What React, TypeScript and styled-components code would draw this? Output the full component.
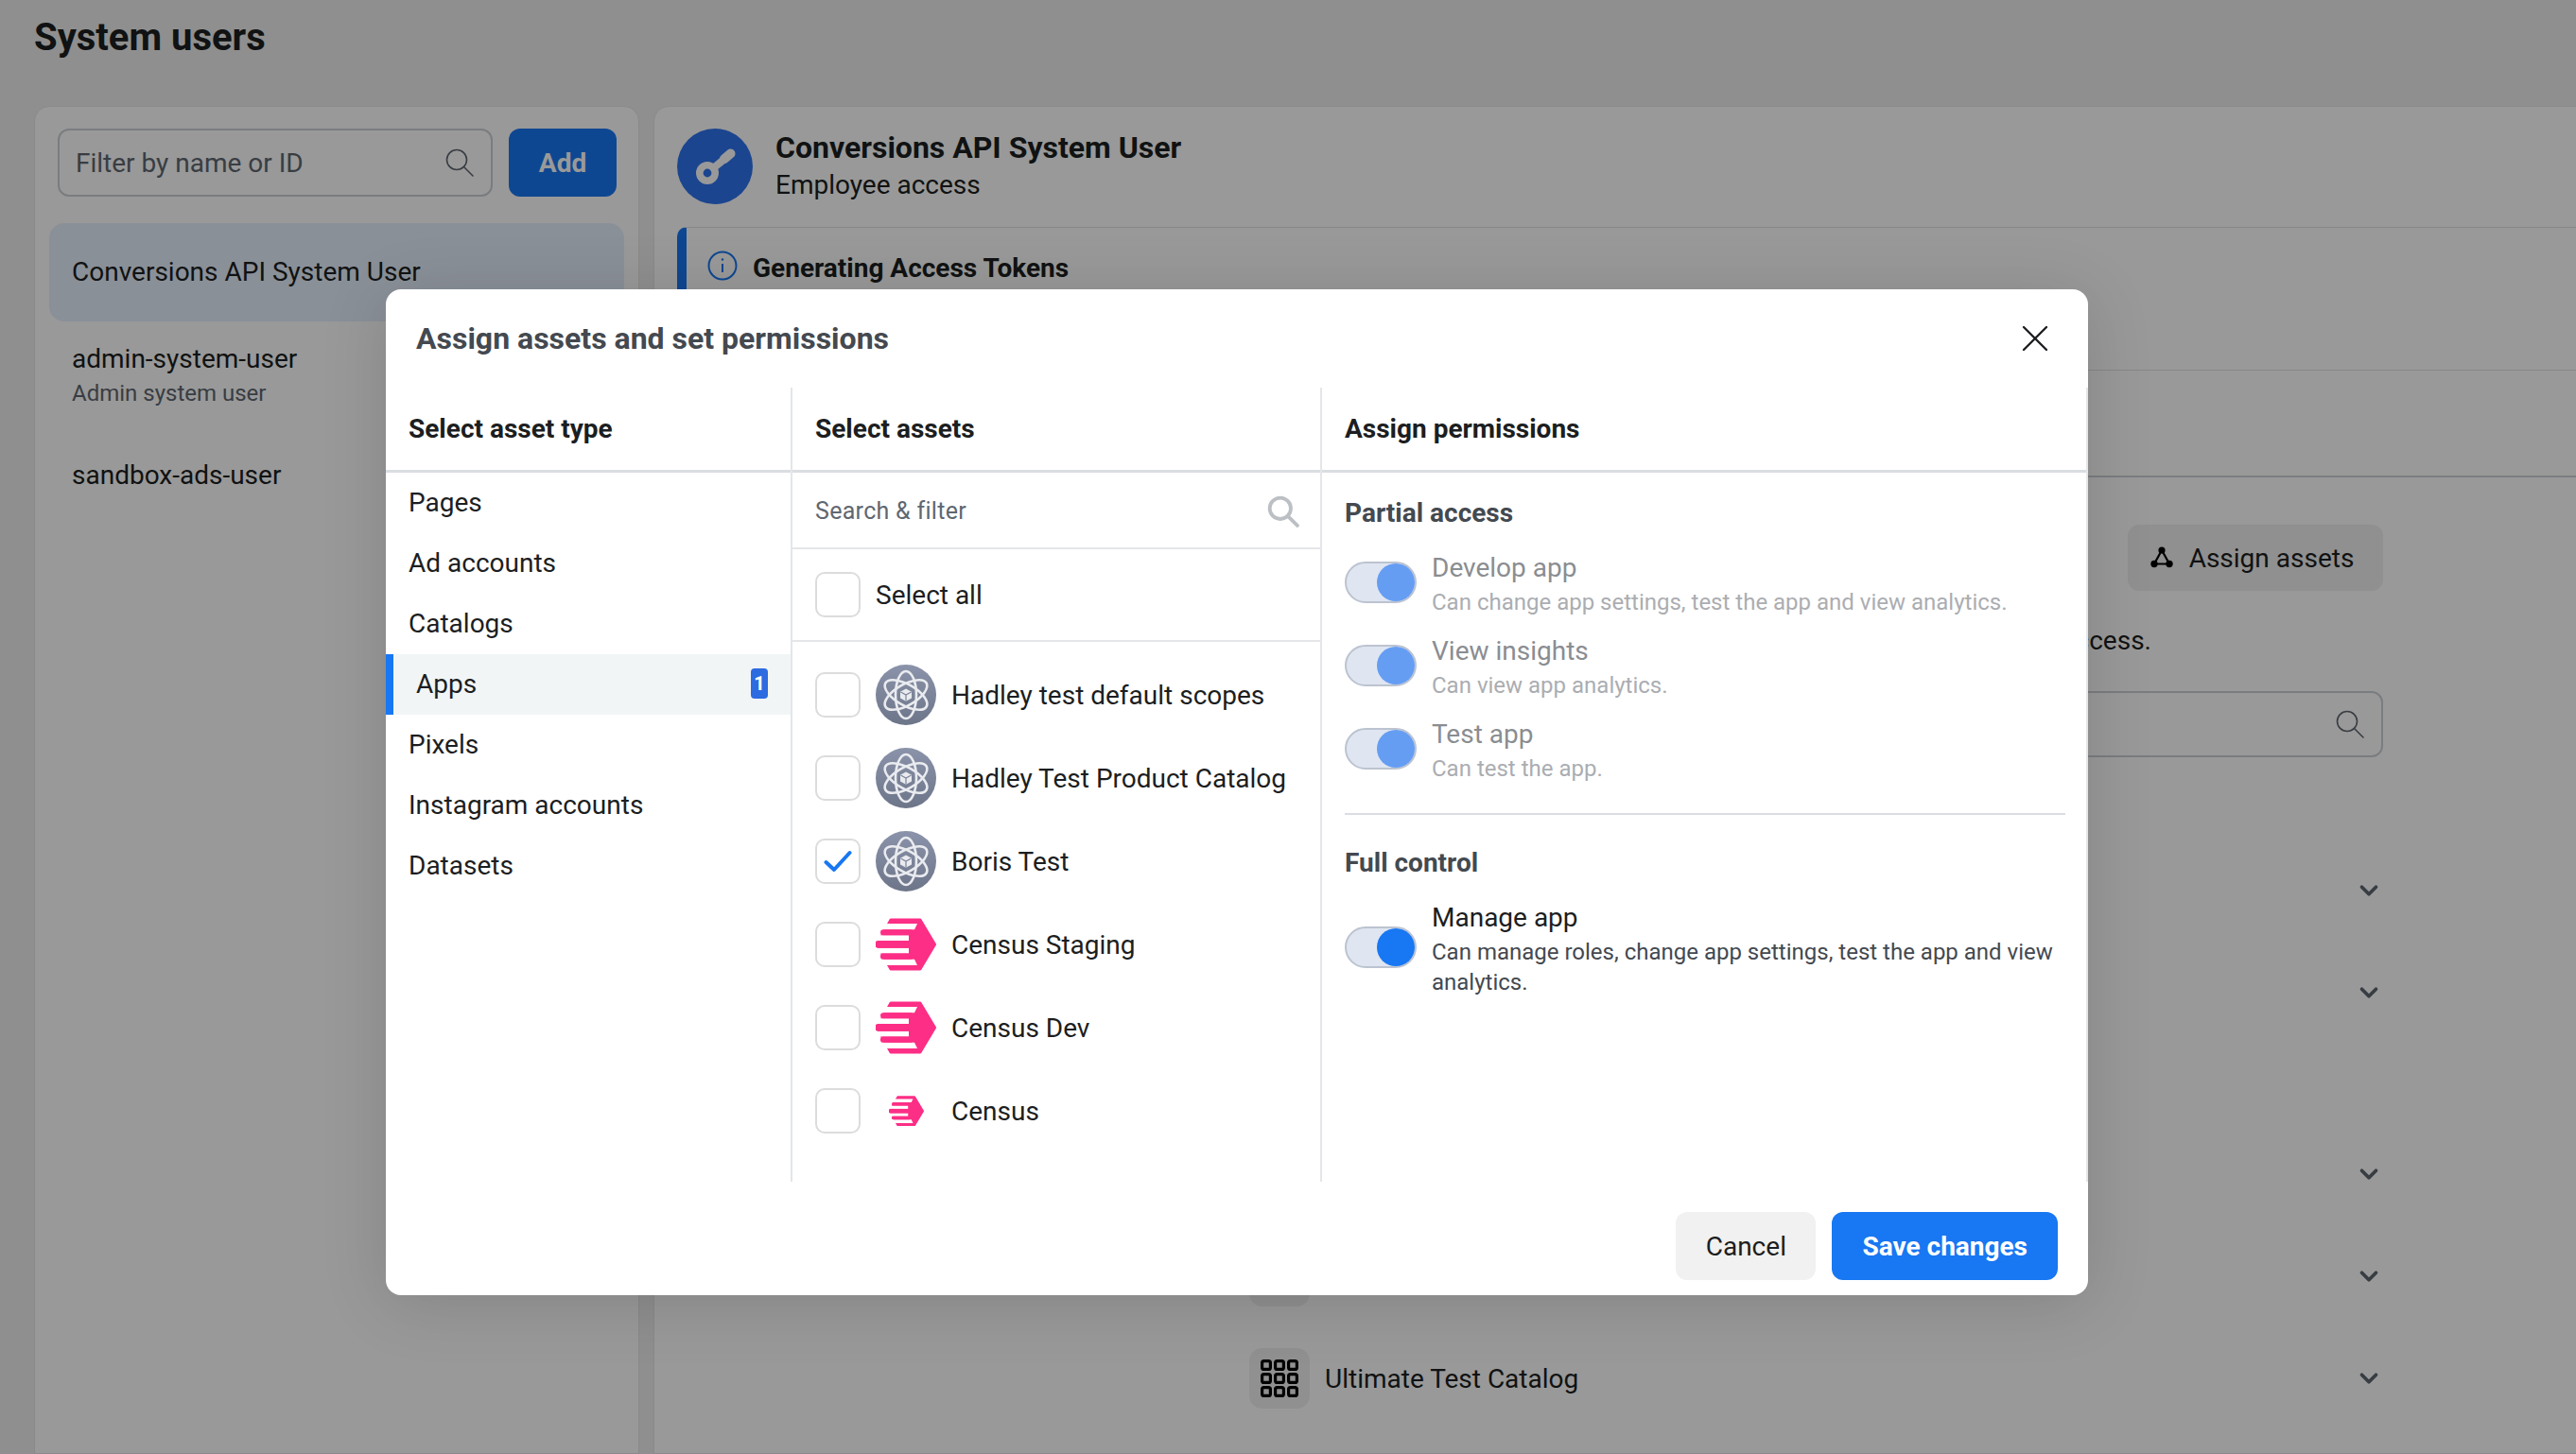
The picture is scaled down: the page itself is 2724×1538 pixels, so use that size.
import React from "react";
import styled, { createGlobalStyle } from "styled-components";
import { X, ChevronDown } from "lucide-react";

const Global = createGlobalStyle`
  html, body { margin: 0; padding: 0; background: #eeeeee; }
  body { font-family: Roboto, "Liberation Sans", sans-serif; color: #1c1e21; -webkit-font-smoothing: antialiased; }
  * { box-sizing: border-box; }
`;

const Page = styled.div`
  position: relative;
  width: 2724px;
  height: 1538px;
  overflow: hidden;
  background: #eeeeee;
`;
const PageTitle = styled.h1`
  margin: 0;
  padding: 16px 0 0 36px;
  height: 112px;
  font-size: 40px;
  line-height: 48px;
  font-weight: 700;
`;
const Columns = styled.div`
  display: flex;
  gap: 15px;
  padding-left: 36px;
  height: 1426px;
`;
const Card = styled.section`
  background: #fff;
  border: 1px solid #e6e6e6;
  border-radius: 16px 16px 0 0;
  flex: none;
`;
const SidePanel = styled(Card)`
  width: 640px;
  padding: 23px 15px 0;
`;
const SideTools = styled.div`
  display: flex;
  gap: 17px;
  padding: 0 8px 0 9px;
  margin-bottom: 28px;
`;
const Field = styled.div`
  flex: 1;
  height: 72px;
  display: flex;
  align-items: center;
  justify-content: space-between;
  padding: 0 17px;
  border: 2px solid #ccd0d5;
  border-radius: 12px;
  background: #fff;
  font-size: 28px;
  color: #606770;
`;
const AddButton = styled.div`
  width: 114px;
  height: 72px;
  border-radius: 12px;
  background: #1877f2;
  color: #fff;
  font-size: 28px;
  font-weight: 700;
  display: flex;
  align-items: center;
  justify-content: center;
`;
const UserRow = styled.div<{ $active?: boolean; $h: number }>`
  height: ${(p) => p.$h}px;
  padding: 0 24px;
  display: flex;
  flex-direction: column;
  justify-content: center;
  border-radius: 16px;
  background: ${(p) => (p.$active ? "#e7f0fe" : "transparent")};
  font-size: 28px;
  line-height: 36px;
`;
const UserNote = styled.div`
  font-size: 24px;
  line-height: 36px;
  color: #606770;
`;
const MainPanel = styled(Card)`
  width: 2060px;
`;
const MainHead = styled.div`
  display: flex;
  align-items: center;
  gap: 24px;
  padding: 23px 24px 24px;
`;
const Avatar = styled.div`
  width: 80px;
  height: 80px;
  border-radius: 50%;
  background: #2f74ee;
  flex: none;
`;
const HeadName = styled.div`
  font-size: 32px;
  line-height: 40px;
  font-weight: 700;
  margin-top: -2px;
`;
const HeadSub = styled.div`
  font-size: 28px;
  line-height: 38px;
  margin-top: 1px;
  color: #1c1e21;
`;
const Banner = styled.div`
  margin-left: 24px;
  height: 152px;
  border: 1px solid #e2e2e2;
  border-left: 10px solid #1877f2;
  border-radius: 10px 0 0 10px;
  padding: 24px 0 0 22px;
  display: flex;
  align-items: flex-start;
  gap: 16px;
  font-size: 28px;
  line-height: 38px;
  font-weight: 700;
`;
const TabsBar = styled.div`
  height: 113px;
  border-bottom: 2px solid #ccd0d5;
`;
const Content = styled.div`
  padding: 50px 230px 0 629px;
`;
const Toolbar = styled.div`
  display: flex;
  justify-content: flex-end;
`;
const GhostButton = styled.div`
  height: 70px;
  width: 270px;
  padding-right: 8px;
  border-radius: 12px;
  background: #f0f0f0;
  display: flex;
  align-items: center;
  justify-content: center;
  gap: 16px;
  font-size: 28px;
`;
const HelpLine = styled.div`
  margin-top: 35px;
  padding-right: 245px;
  text-align: right;
  font-size: 28px;
  line-height: 36px;
`;
const ContentSearch = styled(Field)`
  margin-top: 35px;
  height: 70px;
  justify-content: flex-end;
`;
const AssetGroup = styled.div<{ $gap: number }>`
  margin-top: ${(p) => p.$gap}px;
`;
const AssetRow = styled.div`
  height: 108px;
  display: flex;
  align-items: center;
  gap: 16px;
  font-size: 28px;
  > svg:last-child {
    margin-left: auto;
  }
`;
const AssetIcon = styled.div`
  width: 64px;
  height: 64px;
  border-radius: 14px;
  background: #f0f0f0;
  display: flex;
  align-items: center;
  justify-content: center;
`;

const Overlay = styled.div`
  position: absolute;
  inset: 0;
  background: rgba(0, 0, 0, 0.4);
  padding: 306px 0 0 408px;
`;
const Modal = styled.div`
  width: 1800px;
  height: 1064px;
  background: #fff;
  border-radius: 16px;
  box-shadow: 0 8px 70px rgba(0, 0, 0, 0.14);
  display: flex;
  flex-direction: column;
`;
const ModalHead = styled.div`
  height: 104px;
  padding: 0 32px;
  display: flex;
  align-items: center;
  justify-content: space-between;
`;
const ModalTitle = styled.h2`
  margin: 0;
  font-size: 32px;
  font-weight: 700;
  color: #444950;
`;
const ColumnsGrid = styled.div`
  height: 840px;
  display: grid;
  grid-template-columns: 430px 560px 810px;
`;
const Col = styled.div`
  border-right: 2px solid #e4e6e9;
  display: flex;
  flex-direction: column;
`;
const ColHead = styled.div`
  height: 90px;
  flex: none;
  padding-left: 24px;
  border-bottom: 3px solid #dadde1;
  display: flex;
  align-items: center;
  font-size: 28px;
  font-weight: 700;
`;
const TypeList = styled.div``;
const TypeItem = styled.div<{ $active?: boolean }>`
  height: 64px;
  padding: 0 24px 2px 24px;
  display: flex;
  align-items: center;
  justify-content: space-between;
  font-size: 28px;
  border-left: ${(p) => (p.$active ? "8px solid #1877f2" : "0")};
  background: ${(p) => (p.$active ? "#f2f5f6" : "transparent")};
`;
const Badge = styled.span`
  width: 18px;
  height: 32px;
  border-radius: 4px;
  background: #2d6be0;
  color: #fff;
  font-size: 20px;
  font-weight: 700;
  display: flex;
  align-items: center;
  justify-content: center;
`;
const FilterRow = styled.div`
  height: 81px;
  flex: none;
  padding: 2px 22px 0 24px;
  display: flex;
  align-items: center;
  justify-content: space-between;
  border-bottom: 2px solid #e4e6e9;
  font-size: 25px;
  letter-spacing: 0.3px;
  color: #606770;
`;
const SelectAllRow = styled.div`
  height: 98px;
  flex: none;
  padding-left: 24px;
  display: flex;
  align-items: center;
  gap: 16px;
  font-size: 28px;
  border-bottom: 2px solid #e4e6e9;
`;
const AssetList = styled.div`
  padding-top: 12px;
`;
const PickRow = styled.div`
  height: 88px;
  padding-left: 24px;
  display: flex;
  align-items: center;
  font-size: 28px;
`;
const Box = styled.div`
  width: 48px;
  height: 48px;
  flex: none;
  border: 2px solid #dcdcdc;
  border-radius: 10px;
  display: flex;
  align-items: center;
  justify-content: center;
`;
const LogoSlot = styled.div`
  width: 64px;
  height: 64px;
  flex: none;
  margin: 0 16px;
  display: flex;
  align-items: center;
  justify-content: center;
`;
const PermBody = styled.div`
  padding: 0 22px 0 24px;
`;
const PermGroup = styled.div<{ $divider?: boolean; $top: number }>`
  padding-top: ${(p) => p.$top}px;
  padding-bottom: ${(p) => (p.$divider ? 15 : 0)}px;
  border-bottom: ${(p) => (p.$divider ? "2px solid #dadde1" : "0")};
`;
const PermTitle = styled.div`
  font-size: 28px;
  line-height: 42px;
  font-weight: 700;
  color: #444950;
  margin-bottom: 17px;
`;
const PermRow = styled.div<{ $off?: boolean }>`
  display: flex;
  align-items: center;
  gap: 16px;
  margin-bottom: 18px;
  color: ${(p) => (p.$off ? "#8a8d91" : "#1c1e21")};
`;
const PermText = styled.div`
  margin: 2px 0 -2px;
`;
const Toggle = styled.div<{ $off?: boolean }>`
  width: 76px;
  height: 44px;
  flex: none;
  border-radius: 22px;
  background: #dfe6f1;
  border: 2px solid #bcc3d0;
  display: flex;
  justify-content: flex-end;
  align-items: center;
  &::after {
    content: "";
    width: 40px;
    height: 40px;
    border-radius: 50%;
    background: ${(p) => (p.$off ? "#659df3" : "#1877f2")};
  }
`;
const PermName = styled.div`
  font-size: 28px;
  line-height: 36px;
`;
const PermDesc = styled.div<{ $off?: boolean }>`
  font-size: 24px;
  line-height: 32px;
  margin-top: 2px;
  color: ${(p) => (p.$off ? "#abadb1" : "#444950")};
`;
const ModalFoot = styled.div`
  flex: 1;
  display: flex;
  justify-content: flex-end;
  align-items: flex-start;
  gap: 17px;
  padding: 32px 32px 0 0;
`;
const FootButton = styled.div<{ $primary?: boolean }>`
  height: 72px;
  padding: 0 ${(p) => (p.$primary ? 32 : 31.5)}px;
  border-radius: 12px;
  display: flex;
  align-items: center;
  font-size: 28px;
  font-weight: ${(p) => (p.$primary ? 700 : 400)};
  color: ${(p) => (p.$primary ? "#fff" : "#1c1e21")};
  background: ${(p) => (p.$primary ? "#1877f2" : "#f1f1f1")};
`;

const AtomLogo = () => (
  <svg width="64" height="64" viewBox="0 0 64 64">
    <defs>
      <linearGradient id="atomBg" x1="0" y1="0" x2="0" y2="1">
        <stop offset="0" stopColor="#8a93a9" />
        <stop offset="1" stopColor="#6d7589" />
      </linearGradient>
    </defs>
    <circle cx="32" cy="32" r="32" fill="url(#atomBg)" />
    <g fill="none" stroke="#e9ebef" strokeWidth="2.6">
      <ellipse cx="32" cy="32" rx="25" ry="11" transform="rotate(90 32 32)" />
      <ellipse cx="32" cy="32" rx="25" ry="11" transform="rotate(30 32 32)" />
      <ellipse cx="32" cy="32" rx="25" ry="11" transform="rotate(-30 32 32)" />
    </g>
    <path d="M32 25.5l6 3.3v6.6l-6 3.3-6-3.3v-6.6z" fill="#e9ebef" />
    <path d="M26.5 29l5.5 3 5.5-3M32 32v6.5" fill="none" stroke="#7c849a" strokeWidth="1.2" />
  </svg>
);

const CensusLogo = ({ w }: { w: number }) => (
  <svg width={w} height={(w * 56) / 64} viewBox="0 0 64 56">
    <path
      d="M16 2H47L62.5 28L47 54H16L1.5 28Z"
      fill="#fd2e85"
      stroke="#fd2e85"
      strokeWidth="3"
      strokeLinejoin="round"
    />
    <g fill="#fff">
      <path d="M0 6H44L41 12.2H0Z" />
      <path d="M0 18.2H35V24H0Z" />
      <path d="M0 31.8H35V37.6H0Z" />
      <path d="M0 43.8H41L44 50H0Z" />
    </g>
    <g fill="#fd2e85">
      <path d="M8 12.2h30v6H8a3 3 0 0 1 0-6z" />
      <path d="M3 24h34v7.8H3a3.9 3.9 0 0 1 0-7.8z" />
      <path d="M8 37.6h30v6.2H8a3.1 3.1 0 0 1 0-6.2z" />
    </g>
  </svg>
);

const KeyIcon = () => (
  <svg width="80" height="80" viewBox="0 0 80 80" fill="none">
    <path d="M37 43L54 29" stroke="#fff" strokeWidth="8" />
    <path d="M50 32L56.5 26.5" stroke="#fff" strokeWidth="10" strokeLinecap="round" />
    <circle cx="32" cy="47" r="8.2" stroke="#fff" strokeWidth="7.6" />
  </svg>
);

const InfoIcon = () => (
  <svg width="32" height="32" viewBox="0 0 32 32" fill="none" stroke="#1877f2" strokeWidth="2">
    <circle cx="16" cy="16" r="14.5" />
    <path d="M16 14v9" />
    <circle cx="16" cy="9.5" r="1.2" fill="#1877f2" stroke="none" />
  </svg>
);

const NodesIcon = () => (
  <svg width="26" height="26" viewBox="0 0 26 26" fill="none" stroke="#000" strokeWidth="2.2">
    <path d="M13 5L5 19.5H21Z" />
    <circle cx="13" cy="5" r="3.6" fill="#000" stroke="none" />
    <circle cx="5" cy="19.5" r="3.7" fill="#000" stroke="none" />
    <circle cx="21" cy="19.5" r="3.7" fill="#000" stroke="none" />
  </svg>
);

const GridIcon = () => (
  <svg width="40" height="40" viewBox="0 0 40 40" fill="none" stroke="#000" strokeWidth="3.2">
    {[0, 14, 28].flatMap((y) =>
      [0, 14, 28].map((x) => (
        <rect key={`${x}-${y}`} x={x + 1.6} y={y + 1.6} width="8.8" height="8.8" rx="2" />
      ))
    )}
  </svg>
);

const Check = () => (
  <svg width="30" height="24" viewBox="0 0 30 24" fill="none">
    <path d="M2.5 13L11 21L27.5 3" stroke="#1877f2" strokeWidth="4" strokeLinecap="round" strokeLinejoin="round" />
  </svg>
);

const Glass = ({ size, weight, color }: { size: number; weight: number; color: string }) => (
  <svg width={size} height={size} viewBox="0 0 32 32" fill="none" stroke={color} strokeWidth={weight} strokeLinecap="round">
    <circle cx="13" cy="13" r="10.5" />
    <path d="M20.5 20.5L30 30" />
  </svg>
);

const assetTypes = ["Pages", "Ad accounts", "Catalogs", "Apps", "Pixels", "Instagram accounts", "Datasets"];

const assets = [
  { name: "Hadley test default scopes", logo: "atom" },
  { name: "Hadley Test Product Catalog", logo: "atom" },
  { name: "Boris Test", logo: "atom", checked: true },
  { name: "Census Staging", logo: "census" },
  { name: "Census Dev", logo: "census" },
  { name: "Census", logo: "small" },
];

const partial = [
  { name: "Develop app", desc: "Can change app settings, test the app and view analytics." },
  { name: "View insights", desc: "Can view app analytics." },
  { name: "Test app", desc: "Can test the app." },
];

const Chevron = () => <ChevronDown size={30} strokeWidth={3} color="#5d6670" />;

export default function App() {
  return (
    <Page>
      <Global />
      <PageTitle>System users</PageTitle>
      <Columns>
        <SidePanel>
          <SideTools>
            <Field>
              Filter by name or ID
              <Glass size={32} weight={1.6} color="#606770" />
            </Field>
            <AddButton>Add</AddButton>
          </SideTools>
          <UserRow $active $h={104}>Conversions API System User</UserRow>
          <UserRow $h={116}>
            admin-system-user
            <UserNote>Admin system user</UserNote>
          </UserRow>
          <UserRow $h={94}>sandbox-ads-user</UserRow>
        </SidePanel>
        <MainPanel>
          <MainHead>
            <Avatar>
              <KeyIcon />
            </Avatar>
            <div>
              <HeadName>Conversions API System User</HeadName>
              <HeadSub>Employee access</HeadSub>
            </div>
          </MainHead>
          <Banner>
            <InfoIcon />
            Generating Access Tokens
          </Banner>
          <TabsBar />
          <Content>
            <Toolbar>
              <GhostButton>
                <NodesIcon />
                Assign assets
              </GhostButton>
            </Toolbar>
            <HelpLine>Assign assets to give this user access.</HelpLine>
            <ContentSearch>
              <Glass size={32} weight={1.6} color="#606770" />
            </ContentSearch>
            <AssetGroup $gap={87}>
              <AssetRow><Chevron /></AssetRow>
              <AssetRow><Chevron /></AssetRow>
            </AssetGroup>
            <AssetGroup $gap={84}>
              <AssetRow><Chevron /></AssetRow>
              <AssetRow>
                <AssetIcon />
                <Chevron />
              </AssetRow>
              <AssetRow>
                <AssetIcon><GridIcon /></AssetIcon>
                Ultimate Test Catalog
                <Chevron />
              </AssetRow>
            </AssetGroup>
          </Content>
        </MainPanel>
      </Columns>
      <Overlay>
        <Modal>
          <ModalHead>
            <ModalTitle>Assign assets and set permissions</ModalTitle>
            <X size={48} strokeWidth={1.2} color="#1c1e21" />
          </ModalHead>
          <ColumnsGrid>
            <Col>
              <ColHead>Select asset type</ColHead>
              <TypeList>
                {assetTypes.map((t) => (
                  <TypeItem key={t} $active={t === "Apps"}>
                    {t}
                    {t === "Apps" && <Badge>1</Badge>}
                  </TypeItem>
                ))}
              </TypeList>
            </Col>
            <Col>
              <ColHead>Select assets</ColHead>
              <FilterRow>
                Search &amp; filter
                <Glass size={34} weight={3.6} color="#bcc0c4" />
              </FilterRow>
              <SelectAllRow>
                <Box />
                Select all
              </SelectAllRow>
              <AssetList>
                {assets.map((a) => (
                  <PickRow key={a.name}>
                    <Box>{a.checked && <Check />}</Box>
                    <LogoSlot>
                      {a.logo === "atom" && <AtomLogo />}
                      {a.logo === "census" && <CensusLogo w={64} />}
                      {a.logo === "small" && <CensusLogo w={37} />}
                    </LogoSlot>
                    {a.name}
                  </PickRow>
                ))}
              </AssetList>
            </Col>
            <Col>
              <ColHead>Assign permissions</ColHead>
              <PermBody>
                <PermGroup $divider $top={22}>
                  <PermTitle>Partial access</PermTitle>
                  {partial.map((p) => (
                    <PermRow key={p.name} $off>
                      <Toggle $off />
                      <PermText>
                        <PermName>{p.name}</PermName>
                        <PermDesc $off>{p.desc}</PermDesc>
                      </PermText>
                    </PermRow>
                  ))}
                </PermGroup>
                <PermGroup $top={30}>
                  <PermTitle>Full control</PermTitle>
                  <PermRow>
                    <Toggle />
                    <PermText>
                      <PermName>Manage app</PermName>
                      <PermDesc>Can manage roles, change app settings, test the app and view analytics.</PermDesc>
                    </PermText>
                  </PermRow>
                </PermGroup>
              </PermBody>
            </Col>
          </ColumnsGrid>
          <ModalFoot>
            <FootButton>Cancel</FootButton>
            <FootButton $primary>Save changes</FootButton>
          </ModalFoot>
        </Modal>
      </Overlay>
    </Page>
  );
}
